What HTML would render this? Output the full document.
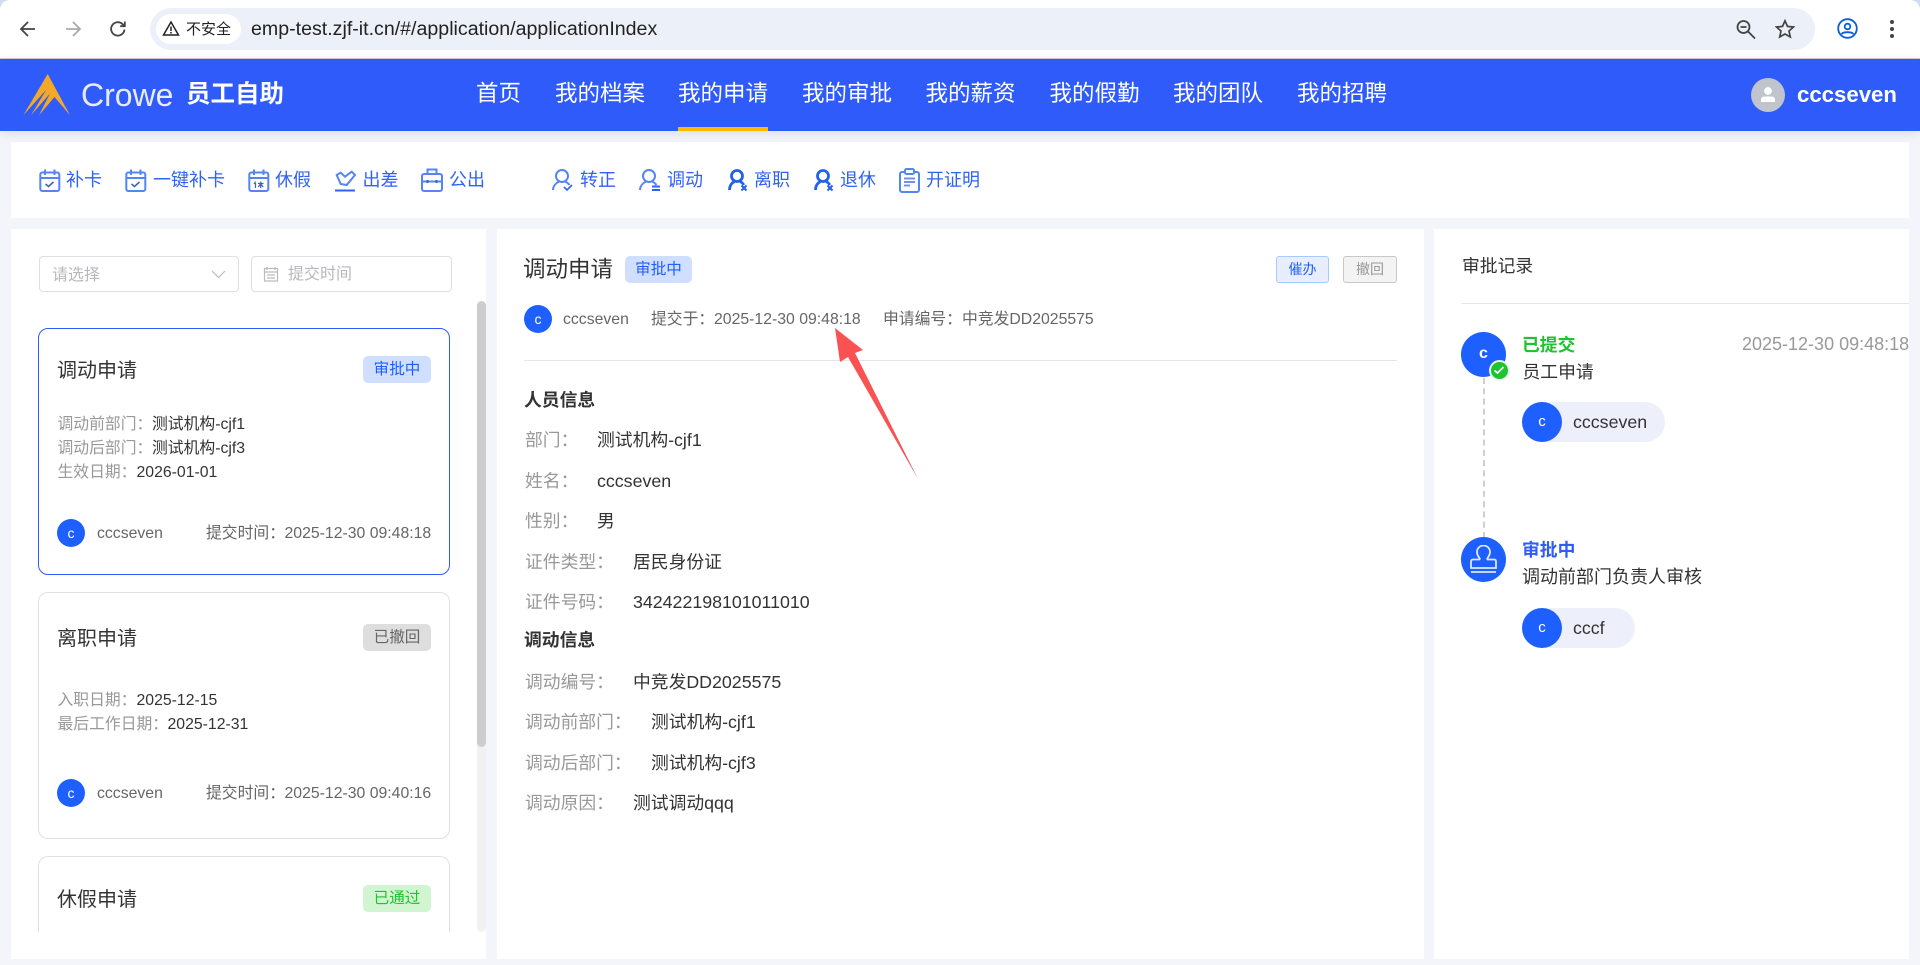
<!DOCTYPE html>
<html lang="zh-CN"><head><meta charset="utf-8"><title>员工自助</title>
<style>
html,body{margin:0;padding:0;overflow:hidden}
body{width:1920px;height:965px;position:relative;background:#f3f5fa;font-family:"Liberation Sans","Noto Sans CJK SC",sans-serif;color:#333}
div,span,svg{position:absolute;box-sizing:border-box}
.t{white-space:nowrap;line-height:24px;height:24px}
.n{font-size:22.5px;color:#fff;top:79px;line-height:30px;height:30px}
.tb{font-size:18px;color:#2f62f5;top:168px}
.card{left:38px;width:412px;background:#fff;border:1px solid #e0e0e2;border-radius:10px}
.badge{left:363px;width:68px;height:27px;border-radius:5px;font-size:15.6px;line-height:27px;text-align:center}
.f156{font-size:15.8px}
.g{color:#999}.d{color:#333}.m{color:#666}
.av{width:28px;height:28px;border-radius:50%;background:#1e5fff;color:#fff;font-size:14px;line-height:28px;text-align:center}
.f{font-size:17.8px}
.pill{left:1522px;height:40px;border-radius:20px;background:#edf0fb}
.pill .a{left:0;top:0;width:40px;height:40px;border-radius:50%;background:#1e5fff;color:#fff;font-size:15px;line-height:40px;text-align:center}
</style></head><body>

<!-- browser chrome -->
<div style="left:0;top:0;width:1920px;height:59px;background:#cfdcf2"></div>
<div style="left:0;top:0;width:1920px;height:59px;background:#fff;border-radius:10px 10px 0 0;border-bottom:1px solid #cfcfd2"></div>
<svg style="left:18px;top:19px" width="20" height="20" viewBox="0 0 20 20" fill="none" stroke="#444" stroke-width="1.8"><path d="M17 10H3.500M10 3l-7 7 7 7"/></svg>
<svg style="left:63px;top:19px" width="20" height="20" viewBox="0 0 20 20" fill="none" stroke="#aaa" stroke-width="1.8"><path d="M3 10h13.500M10 3l7 7-7 7"/></svg>
<svg style="left:108px;top:19px" width="20" height="20" viewBox="0 0 20 20" fill="none" stroke="#444" stroke-width="1.8"><path d="M16.500 10.500A6.700 6.700 0 1 1 14.600 5.200L16.500 7M16.800 2.500V7.200H12.200"/></svg>
<div style="left:150px;top:8px;width:1665px;height:42px;border-radius:21px;background:#ecf0f9"></div>
<div style="left:156px;top:14px;width:85px;height:30px;border-radius:15px;background:#fff"></div>
<svg style="left:162px;top:20px" width="18" height="17" viewBox="0 0 18 17" fill="none" stroke="#222" stroke-width="1.5"><path d="M9 2 16.500 15H1.500Z"/><path d="M9 6.500v4.500M9 12v1.600"/></svg>
<div class="t" style="left:186px;top:18px;font-size:15px;color:#222">不安全</div>
<div class="t" style="left:251px;top:17px;font-size:19.6px;color:#222">emp-test.zjf-it.cn/#/application/applicationIndex</div>
<svg style="left:1735px;top:19px" width="22" height="22" viewBox="0 0 22 22" fill="none" stroke="#444" stroke-width="1.8"><circle cx="8.500" cy="8" r="6"/><path d="M5.500 8h6M13 12.500l7 7"/></svg>
<svg style="left:1775px;top:19px" width="20" height="20" viewBox="0 0 20 20" fill="none" stroke="#444" stroke-width="1.7"><path d="M10 1.800l2.500 5.600 6 .6-4.500 4 1.300 6L10 15l-5.300 3 1.300-6-4.500-4 6-.6z"/></svg>
<svg style="left:1837px;top:18px" width="21" height="21" viewBox="0 0 21 21" fill="none" stroke="#0b5dd6" stroke-width="1.8"><circle cx="10.500" cy="10.500" r="9.300"/><circle cx="10.500" cy="8.500" r="2.800"/><path d="M4.500 16c2-2.400 10-2.400 12 0"/></svg>
<div style="left:1890px;top:20px;width:4px;height:4px;border-radius:50%;background:#444"></div>
<div style="left:1890px;top:27px;width:4px;height:4px;border-radius:50%;background:#444"></div>
<div style="left:1890px;top:34px;width:4px;height:4px;border-radius:50%;background:#444"></div>

<!-- header -->
<div style="left:0;top:59px;width:1920px;height:72px;background:#2f5bfa;box-shadow:0 3px 10px rgba(0,0,0,.09)"></div>
<svg style="left:15px;top:68px" width="70" height="54" viewBox="0 0 70 54"><path d="M32.700 6 55 47.300 39.500 29 24 47.300 35 25.500 16 47.300 31.500 21.500 8.300 47.300Z" fill="#f4a926"/></svg>
<div class="t" style="left:81px;top:76px;height:38px;line-height:38px;font-size:32px;color:#e6ecff">Crowe</div>
<div class="t" style="left:186px;top:80px;height:30px;line-height:30px;font-size:24.5px;font-weight:700;color:#fff">员工自助</div>
<div class="t n" style="left:476px">首页</div>
<div class="t n" style="left:555px">我的档案</div>
<div class="t n" style="left:678px">我的申请</div>
<div class="t n" style="left:802px">我的审批</div>
<div class="t n" style="left:925.500px">我的薪资</div>
<div class="t n" style="left:1049.500px">我的假勤</div>
<div class="t n" style="left:1173px">我的团队</div>
<div class="t n" style="left:1297px">我的招聘</div>
<div style="left:678px;top:127px;width:90px;height:4px;background:#ffb800"></div>
<div style="left:1751px;top:78px;width:34px;height:34px;border-radius:50%;background:#c0c4cc"></div>
<svg style="left:1758px;top:85px" width="20" height="20" viewBox="0 0 20 20" fill="#fff"><circle cx="10" cy="6" r="3.900"/><path d="M3 17v-2.500Q3 11.500 7 11.500h6q4 0 4 3V17Z"/></svg>
<div class="t" style="left:1797px;top:80px;height:30px;line-height:30px;font-size:22.2px;font-weight:700;color:#fff">cccseven</div>

<!-- action bar -->
<div style="left:11px;top:142px;width:1898px;height:76px;background:#fff"></div>
<svg style="left:38px;top:169px" width="23" height="23" viewBox="0 0 23 23" fill="none" stroke="#5485f5" stroke-width="2"><rect x="2.300" y="3.500" width="19" height="18.500" rx="2"/><path d="M2 9h19M7 .5v5.500M16.500 .5v5.500"/><path d="M7.500 15l3 2.500 5-4.500" stroke="#3d62b5" stroke-width="1.600"/></svg>
<div class="t tb" style="left:66px">补卡</div>
<svg style="left:124px;top:169px" width="23" height="23" viewBox="0 0 23 23" fill="none" stroke="#5485f5" stroke-width="2"><rect x="2.300" y="3.500" width="19" height="18.500" rx="2"/><path d="M2 9h19M7 .5v5.500M16.500 .5v5.500"/><path d="M7.500 15l3 2.500 5-4.500" stroke="#3d62b5" stroke-width="1.600"/></svg>
<div class="t tb" style="left:153px">一键补卡</div>
<svg style="left:247px;top:169px" width="23" height="23" viewBox="0 0 23 23" fill="none" stroke="#5485f5" stroke-width="2"><rect x="2.300" y="3.500" width="19" height="18.500" rx="2"/><path d="M2 9h19M7 .5v5.500M16.500 .5v5.500"/><path d="M8.500 12.500l-1.500 2.500M8.500 14v5M11 14.500h5.500M13.700 12.500v6.500M13.700 15l-2.500 3M13.700 15l2.500 3" stroke="#3d62b5" stroke-width="1.200"/></svg>
<div class="t tb" style="left:275px">休假</div>
<svg style="left:333px;top:168px" width="24" height="24" viewBox="0 0 24 24" fill="none" stroke="#5485f5" stroke-width="2"><path d="M3.700 7 7.700 4.700 12 8.700 18.700 3.700 22 7 13.700 17 7.700 16Z"/><path d="M2 22.500h20" stroke="#2f62f5"/></svg>
<div class="t tb" style="left:362.500px">出差</div>
<svg style="left:420px;top:168px" width="24" height="24" viewBox="0 0 24 24" fill="none" stroke="#5485f5" stroke-width="2"><rect x="2" y="6" width="20" height="17" rx="2"/><path d="M7.500 6V1.500h9V6M2 13.500h20"/><path d="M7.500 12v3M16.500 12v3" stroke="#3d62b5"/></svg>
<div class="t tb" style="left:449px">公出</div>
<svg style="left:551px;top:168px" width="23" height="24" viewBox="0 0 23 24" fill="none" stroke="#5485f5" stroke-width="2"><circle cx="11" cy="8" r="6"/><path d="M2 22c0-4 3-7 6-8.500M14 13.500c2 .8 3.500 2 4.500 3.500"/><path d="M13 19l3 3 5-5" stroke="#2f62f5" stroke-width="1.600"/></svg>
<div class="t tb" style="left:580px">转正</div>
<svg style="left:638px;top:168px" width="23" height="24" viewBox="0 0 23 24" fill="none" stroke="#5485f5" stroke-width="2"><circle cx="11" cy="8" r="6"/><path d="M2 22c0-4 3-7 6-8.500M14 13.500c2 .8 3.500 2 4.500 3.500"/><path d="M14 18.500h8M22 22h-8" stroke="#2f62f5" stroke-width="2"/></svg>
<div class="t tb" style="left:667px">调动</div>
<svg style="left:726px;top:168px" width="23" height="24" viewBox="0 0 23 24" fill="none" stroke="#2260ee" stroke-width="2.800"><circle cx="11" cy="8" r="5.500"/><path d="M3.500 22c0-4 2-7 5-8.500M14 13.500c2 .8 3 2 3.800 3.500"/><path d="M15.500 17.500l5 5M20.500 17.500l-5 5" stroke-width="2"/></svg>
<div class="t tb" style="left:754px">离职</div>
<svg style="left:812px;top:168px" width="23" height="24" viewBox="0 0 23 24" fill="none" stroke="#2260ee" stroke-width="2.800"><circle cx="11" cy="8" r="5.500"/><path d="M3.500 22c0-4 2-7 5-8.500M14 13.500c2 .8 3 2 3.800 3.500"/><path d="M15.500 17.500l5 5M20.500 17.500l-5 5" stroke-width="2"/></svg>
<div class="t tb" style="left:840px">退休</div>
<svg style="left:898px;top:168px" width="23" height="25" viewBox="0 0 23 25" fill="none" stroke="#5485f5" stroke-width="2"><rect x="2" y="4" width="19" height="20" rx="2"/><rect x="7" y="1" width="9" height="5" rx="1.500" fill="#fff"/><path d="M6 10.500h11M6 14h11M6 17.500h6" stroke="#6f93e8"/></svg>
<div class="t tb" style="left:926px">开证明</div>

<!-- left panel -->
<div style="left:11px;top:229px;width:475px;height:730px;background:#fff"></div>
<div style="left:38.500px;top:256px;width:200.500px;height:36px;border:1px solid #dcdfe6;border-radius:4px"></div>
<div class="t" style="left:52px;top:264px;font-size:16px;color:#b8b8bd">请选择</div>
<svg style="left:211px;top:270px" width="15" height="9" viewBox="0 0 15 9" fill="none" stroke="#bbb" stroke-width="1.200"><path d="M1 1l6.500 6.500L14 1"/></svg>
<div style="left:251px;top:256px;width:201px;height:36px;border:1px solid #dcdfe6;border-radius:4px"></div>
<svg style="left:263px;top:266px" width="16" height="16" viewBox="0 0 16 16" fill="none" stroke="#bbb" stroke-width="1.200"><rect x="1.500" y="2.500" width="13" height="12.500"/><path d="M1.500 6h13M4 1v3M12 1v3M4 9h8M4 12h8"/></svg>
<div class="t" style="left:288px;top:263px;font-size:16px;color:#b8b8bd">提交时间</div>
<div style="left:477px;top:301px;width:9px;height:631px;background:#f1f1f1;border-radius:4.500px"></div>
<div style="left:477px;top:301px;width:9px;height:446px;background:#cdcdcf;border-radius:4.500px"></div>

<div class="card" style="top:328px;height:247px;border-color:#2f5bfa"></div>
<div class="t" style="left:57px;top:359px;font-size:20px">调动申请</div>
<div class="badge" style="top:356px;background:#d0deff;color:#1e5fff">审批中</div>
<div class="t f156 g" style="left:57.500px;top:413px">调动前部门：</div><div class="t f156 d" style="left:152px;top:413px">测试机构-cjf1</div>
<div class="t f156 g" style="left:57.500px;top:437px">调动后部门：</div><div class="t f156 d" style="left:152px;top:437px">测试机构-cjf3</div>
<div class="t f156 g" style="left:57.500px;top:461px">生效日期：</div><div class="t f156 d" style="left:136.500px;top:461px">2026-01-01</div>
<div class="av" style="left:57px;top:519px">c</div>
<div class="t f156 m" style="left:97px;top:522px">cccseven</div>
<div class="t f156 m" style="left:206px;top:522px">提交时间：</div><div class="t f156 m" style="left:284.500px;top:522px">2025-12-30 09:48:18</div>

<div class="card" style="top:592px;height:247px"></div>
<div class="t" style="left:57px;top:627px;font-size:20px">离职申请</div>
<div class="badge" style="top:624px;background:#dedede;color:#666">已撤回</div>
<div class="t f156 g" style="left:57.500px;top:689px">入职日期：</div><div class="t f156 d" style="left:136.500px;top:689px">2025-12-15</div>
<div class="t f156 g" style="left:57.500px;top:713px">最后工作日期：</div><div class="t f156 d" style="left:167.500px;top:713px">2025-12-31</div>
<div class="av" style="left:57px;top:779px">c</div>
<div class="t f156 m" style="left:97px;top:782px">cccseven</div>
<div class="t f156 m" style="left:206px;top:782px">提交时间：</div><div class="t f156 m" style="left:284.500px;top:782px">2025-12-30 09:40:16</div>

<div style="left:38px;top:856px;width:412px;height:76px;background:#fff;border:1px solid #e0e0e2;border-bottom:0;border-radius:10px 10px 0 0"></div>
<div class="t" style="left:57px;top:888px;font-size:20px">休假申请</div>
<div class="badge" style="top:885px;background:#d0f5d0;color:#1fc22f">已通过</div>

<!-- middle panel -->
<div style="left:497px;top:229px;width:926.500px;height:730px;background:#fff"></div>
<div class="t" style="left:523px;top:256px;height:28px;line-height:28px;font-size:22.500px">调动申请</div>
<div class="badge" style="left:625px;top:256px;width:67px;background:#d0deff;color:#1e5fff">审批中</div>
<div style="left:1276px;top:256px;width:53px;height:27px;border:1px solid #a6ccff;border-radius:3px;background:#e8eeff;color:#1e5fff;font-size:14px;line-height:25px;text-align:center">催办</div>
<div style="left:1343px;top:256px;width:54px;height:27px;border:1px solid #c8c8c8;border-radius:3px;background:#f3f3f3;color:#999;font-size:14px;line-height:25px;text-align:center">撤回</div>
<div class="av" style="left:524px;top:305px">c</div>
<div class="t f156 m" style="left:563px;top:308px">cccseven</div>
<div class="t f156 m" style="left:651px;top:308px">提交于：</div><div class="t f156 m" style="left:714px;top:308px">2025-12-30 09:48:18</div>
<div class="t f156 m" style="left:883px;top:308px">申请编号：</div><div class="t f156 m" style="left:962px;top:308px">中竞发DD2025575</div>
<div style="left:524px;top:360px;width:873px;height:1px;background:#e4e4ea"></div>

<div class="t f" style="left:524px;top:388px;font-weight:700">人员信息</div>
<div class="t f g" style="left:525px;top:428px">部门：</div><div class="t f d" style="left:597px;top:428px">测试机构-cjf1</div>
<div class="t f g" style="left:525px;top:469px">姓名：</div><div class="t f d" style="left:597px;top:469px">cccseven</div>
<div class="t f g" style="left:525px;top:509px">性别：</div><div class="t f d" style="left:597px;top:509px">男</div>
<div class="t f g" style="left:525px;top:550px">证件类型：</div><div class="t f d" style="left:633px;top:550px">居民身份证</div>
<div class="t f g" style="left:525px;top:590px">证件号码：</div><div class="t f d" style="left:633px;top:590px">342422198101011010</div>
<div class="t f" style="left:524px;top:628px;font-weight:700">调动信息</div>
<div class="t f g" style="left:525px;top:670px">调动编号：</div><div class="t f d" style="left:633px;top:670px">中竞发DD2025575</div>
<div class="t f g" style="left:525px;top:710px">调动前部门：</div><div class="t f d" style="left:651px;top:710px">测试机构-cjf1</div>
<div class="t f g" style="left:525px;top:751px">调动后部门：</div><div class="t f d" style="left:651px;top:751px">测试机构-cjf3</div>
<div class="t f g" style="left:525px;top:791px">调动原因：</div><div class="t f d" style="left:633px;top:791px">测试调动qqq</div>

<svg style="left:825px;top:320px" width="100" height="165" viewBox="825 320 100 165"><path d="M835 328 863 350 855 353 918 479 848 357 840 362Z" fill="#fa5252"/></svg>

<!-- right panel -->
<div style="left:1434px;top:229px;width:475px;height:730px;background:#fff"></div>
<div class="t f" style="left:1462px;top:254px">审批记录</div>
<div style="left:1462px;top:303px;width:447px;height:1px;background:#e4e4ea"></div>
<div style="left:1482.500px;top:378px;width:0;height:160px;border-left:2px dashed #cfcfcf"></div>
<div style="left:1461px;top:332px;width:45px;height:45px;border-radius:50%;background:#1e5fff;color:#fff;font-size:16px;font-weight:700;line-height:43px;text-align:center">c</div>
<div style="left:1488.500px;top:359.500px;width:21px;height:21px;border-radius:50%;background:#1fc22f;border:2px solid #e8f6ea"></div>
<svg style="left:1493px;top:364px" width="12" height="12" viewBox="0 0 12 12" fill="none" stroke="#fff" stroke-width="1.700"><path d="M1.500 6.500 4.500 9 10.500 3"/></svg>
<div class="t f" style="left:1522px;top:333px;font-weight:700;color:#1fc22f">已提交</div>
<div class="t" style="left:1742px;top:332px;font-size:18px;color:#999">2025-12-30 09:48:18</div>
<div class="t f" style="left:1522.500px;top:360px">员工申请</div>
<div class="pill" style="top:402px;width:143px"><div class="a">c</div><div class="t f" style="left:51px;top:8px">cccseven</div></div>

<div style="left:1461px;top:537px;width:45px;height:45px;border-radius:50%;background:#1e5fff"></div>
<svg style="left:1469px;top:545px" width="29" height="29" viewBox="0 0 29 29" fill="none" stroke="#dfe8ff" stroke-width="1.800"><path d="M11 14.500c0-2-3-3-3-7.500a6.500 6.500 0 0 1 13 0c0 4.500-3 5.500-3 7.500"/><path d="M11 14.500H4q-2 0-2 2V23H27V16.500q0-2-2-2H18"/><path d="M2 27H27"/></svg>
<div class="t f" style="left:1522px;top:538px;font-weight:700;color:#2f5bfa">审批中</div>
<div class="t" style="left:1522px;top:565px;font-size:18px">调动前部门负责人审核</div>
<div class="pill" style="top:608px;width:113px"><div class="a">c</div><div class="t f" style="left:51px;top:8px">cccf</div></div>
</body></html>
